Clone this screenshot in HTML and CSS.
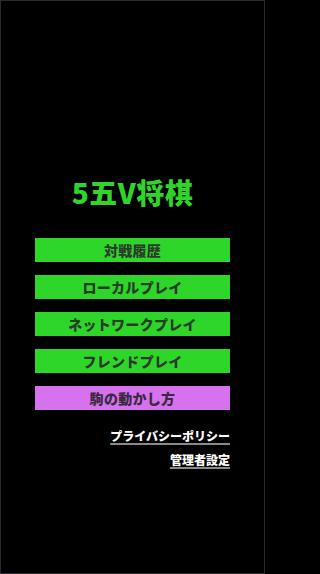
FILE: index.html
```html
<!DOCTYPE html>
<html lang="ja">
<head>
<meta charset="utf-8">
<link rel="stylesheet" href="styles.css">
</head>
<body>
<div class="screen">
  <h1 class="title">5五V将棋</h1>
  <nav class="menu">
    <button class="btn green">対戦履歴</button>
    <button class="btn green">ローカルプレイ</button>
    <button class="btn green">ネットワークプレイ</button>
    <button class="btn green">フレンドプレイ</button>
    <button class="btn purple">駒の動かし方</button>
  </nav>
  <div class="links">
    <a class="link" href="#">プライバシーポリシー</a>
    <a class="link" href="#">管理者設定</a>
  </div>
</div>
</body>
</html>
```
FILE: styles.css
```css
html, body {
  margin: 0;
  padding: 0;
  background: #000;
}
body {
  font-family: "Noto Sans CJK JP", "Noto Sans", sans-serif;
}
.screen {
  box-sizing: border-box;
  width: 265px;
  height: 574px;
  border: 1px solid #2a2a33;
  display: flex;
  flex-direction: column;
  align-items: center;
  padding-top: 174px;
}
.title {
  margin: 0;
  font-size: 28px;
  line-height: 34px;
  font-weight: 900;
  color: #2fd52a;
  letter-spacing: 0.5px;
}
.menu {
  margin-top: 29px;
  display: flex;
  flex-direction: column;
  gap: 13px;
}
.btn {
  width: 195px;
  height: 24px;
  border: none;
  margin: 0;
  padding: 0;
  font-family: inherit;
  font-size: 14px;
  font-weight: 900;
  color: #2b3a2b;
  line-height: 24px;
  letter-spacing: 0.3px;
}
.green { background: #2ed62a; }
.purple { background: #d672ee; color: #3a2a3e; }
.links {
  width: 195px;
  margin-top: 18px;
  display: flex;
  flex-direction: column;
  align-items: flex-end;
  gap: 8px;
}
.link {
  color: #fff;
  font-size: 12px;
  font-weight: 900;
  line-height: 16px;
  text-decoration: underline;
  text-decoration-color: #8a8a8a;
  text-decoration-thickness: 2px;
  text-underline-offset: 2px;
}
```
